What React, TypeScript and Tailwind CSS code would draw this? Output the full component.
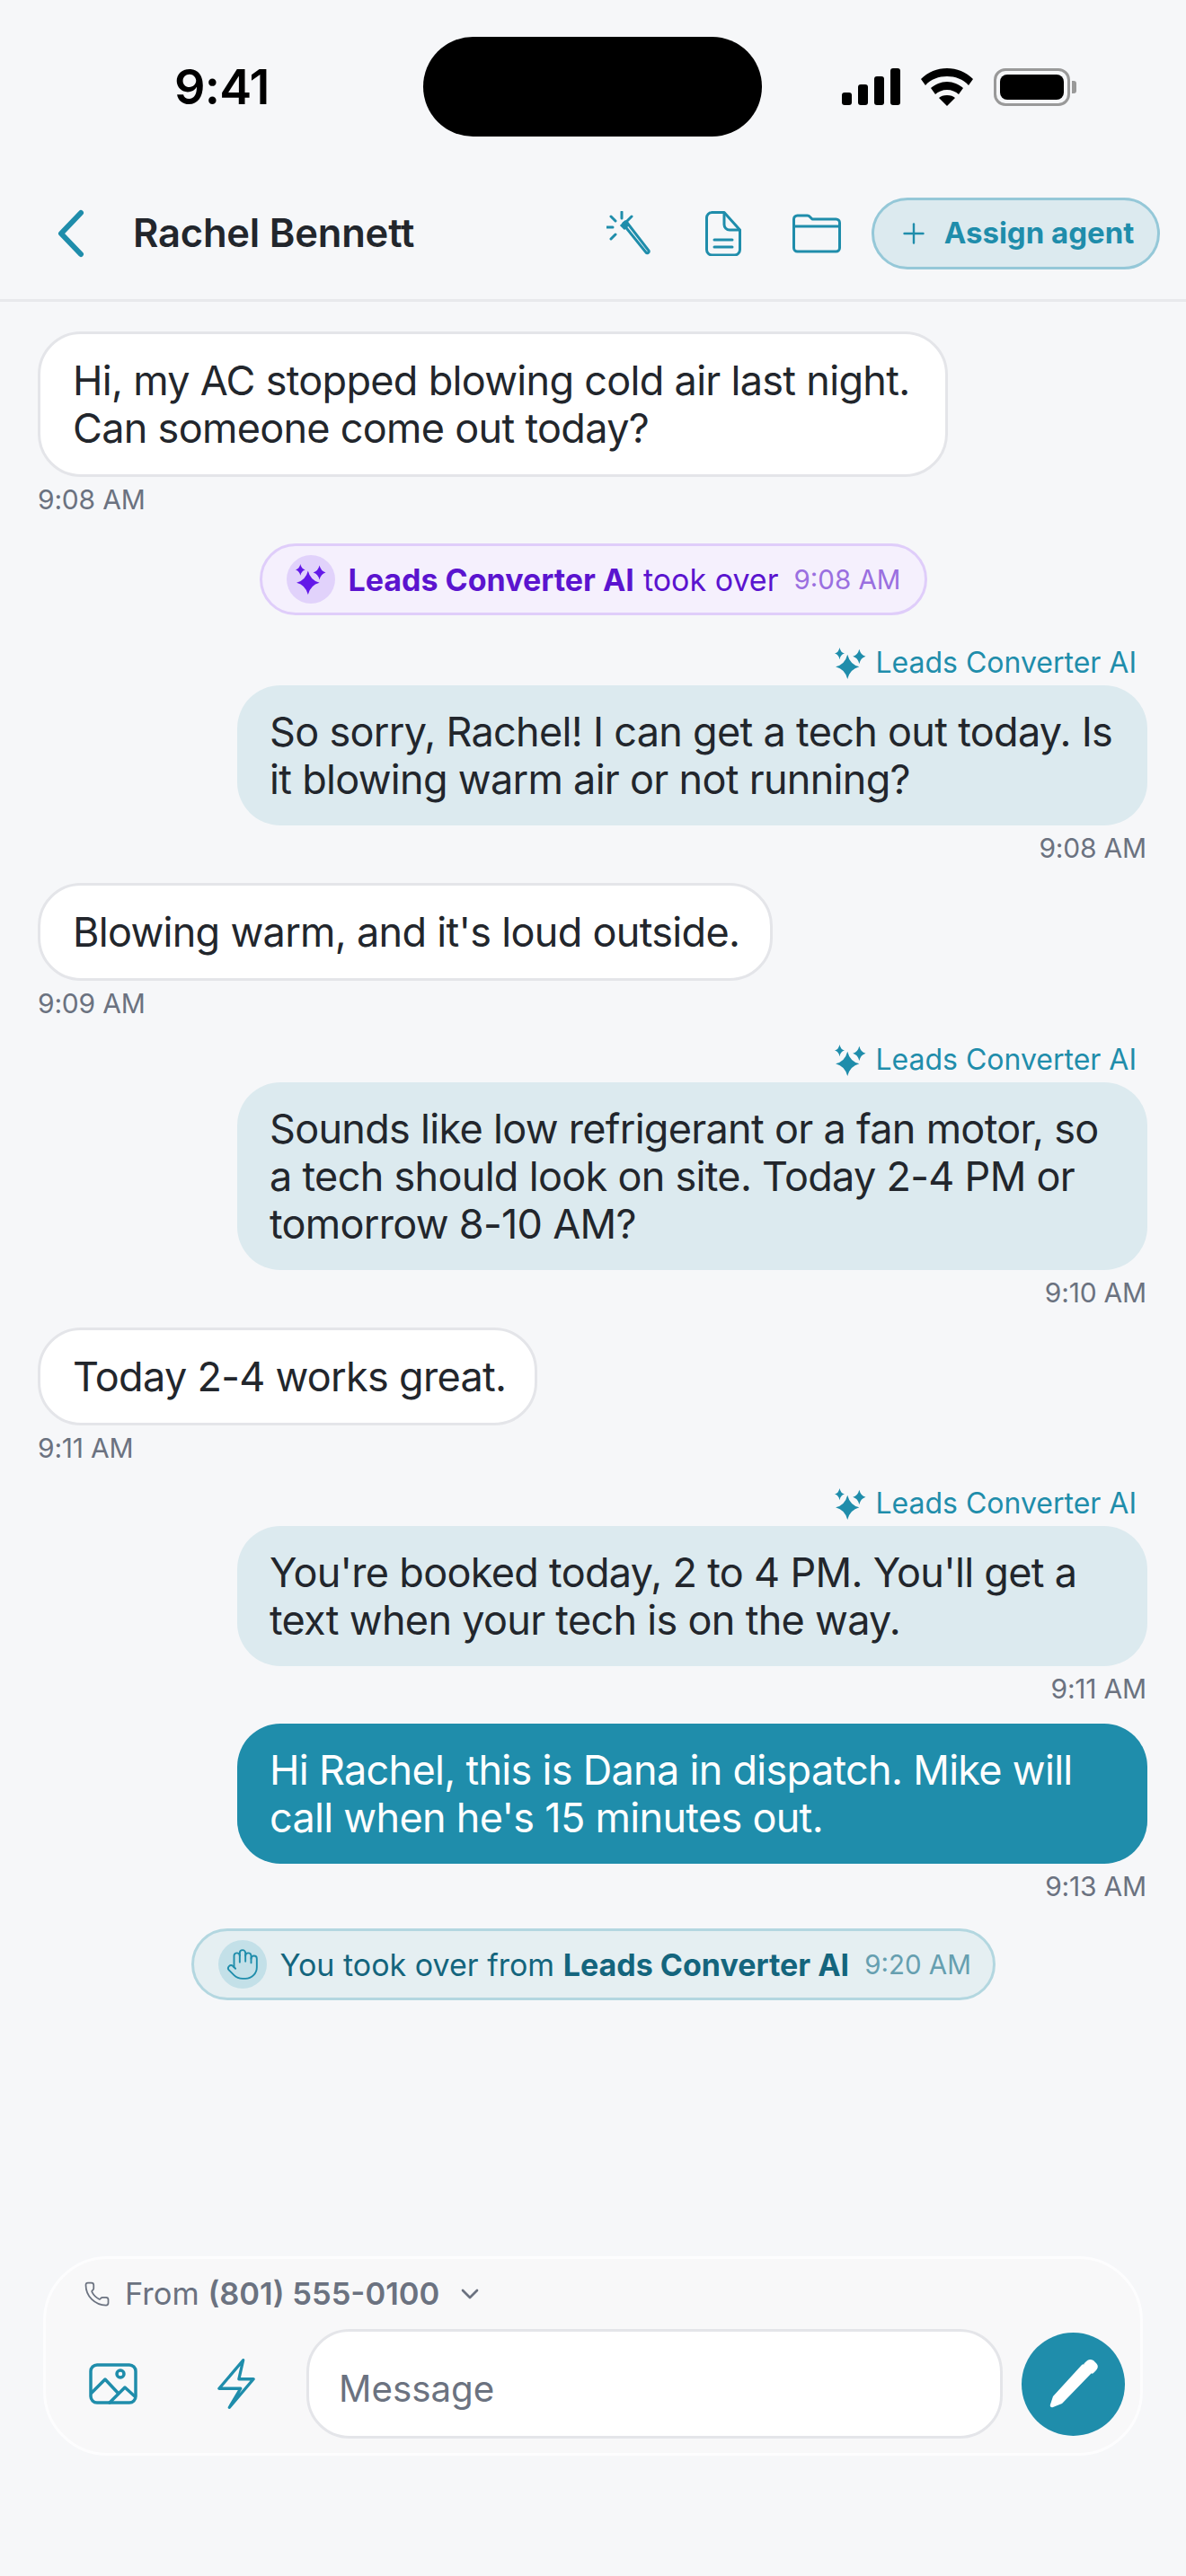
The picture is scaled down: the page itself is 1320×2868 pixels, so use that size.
import { ChevronDown, Hand, Phone, Plus } from 'lucide-react';
import type { ReactNode } from 'react';

function Sparkles({ className }: { className?: string }) {
  return (
    <svg viewBox="0 0 32 32" className={className} fill="currentColor">
      <path d="M13 7Q15.500 17 25 19.500 15.500 22 13 32 10.500 22 1 19.500 10.500 17 13 7z" />
      <path d="M5 0Q6 5 10 6 6 7 5 12 4 7 0 6 4 5 5 0z" />
      <path d="M25 1.500Q26.500 7.500 31.500 9 26.500 10.500 25 16.500 23.500 10.500 18.500 9 23.500 7.500 25 1.500z" />
    </svg>
  );
}

function AgentLabel() {
  return (
    <div className="flex items-center justify-end gap-[10px] pr-[55px] h-[46px] mb-[2px] text-[32px] leading-[46px] text-[#1f8dab]">
      <Sparkles className="w-[35px] h-[35px]" />
      <span>Leads Converter AI</span>
    </div>
  );
}

function Time({ children, right }: { children: ReactNode; right?: boolean }) {
  return (
    <div className={`text-[30px] tracking-[-0.2px] leading-[40px] text-[#6b7280] mt-[5px] ${right ? 'text-right pr-[1px]' : ''}`}>
      {children}
    </div>
  );
}

function Incoming({ text, time, width }: { text: ReactNode; time: string; width: string }) {
  return (
    <div className="pl-[42px]">
      <div className={`${width} bg-white border-[3px] border-[#e4e5e9] rounded-[48px] pl-[36px] py-[25px] text-[45px] tracking-[-0.7px] leading-[53px] text-[#22262c]`}>
        {text}
      </div>
      <Time>{time}</Time>
    </div>
  );
}

function Outgoing({ text, time, dark }: { text: ReactNode; time: string; dark?: boolean }) {
  return (
    <div className="pl-[264px] pr-[43px]">
      <div className={`rounded-[48px] pl-[36px] pr-[30px] py-[25px] text-[45px] tracking-[-0.7px] leading-[53px] ${dark ? 'bg-[#1f8dab] text-white' : 'bg-[#dceaef] text-[#22262c]'}`}>
        {text}
      </div>
      <Time right>{time}</Time>
    </div>
  );
}

export default function App() {
  return (
    <div className="w-[1320px] h-[2868px] bg-[#f6f7f9] flex flex-col font-['Inter',sans-serif] overflow-hidden">
      {/* status bar */}
      <div className="grid grid-cols-[471px_377px_1fr] pt-[41px] h-[190px] shrink-0">
        <div className="h-[111px] flex items-center pl-[194px] text-[54px] font-semibold text-black tracking-[-0.8px]">9:41</div>
        <div className="h-[111px] bg-black rounded-full" />
        <div className="h-[111px] flex items-center pl-[89px] gap-[23px]">
          <svg viewBox="0 0 65 41" className="w-[65px] h-[41px]" fill="#000">
            <rect x="0" y="27" width="11" height="14" rx="3" />
            <rect x="18" y="18" width="11" height="23" rx="3" />
            <rect x="36" y="9" width="11" height="32" rx="3" />
            <rect x="54" y="0" width="11" height="41" rx="3" />
          </svg>
          <svg viewBox="0 0 58 42" className="w-[58px] h-[42px]" fill="#000">
            <path d="M29 0c11 0 21 4 29 12l-5 7C47 12 38 9 29 9S11 12 5 19l-5-7C8 4 18 0 29 0z" />
            <path d="M29 15c7 0 13 3 18 7l-5 7c-3-3-8-5-13-5s-10 2-13 5l-5-7c5-4 11-7 18-7z" />
            <path d="M29 30c4 0 7 1 9 3L29 42l-9-9c2-2 5-3 9-3z" />
          </svg>
          <div className="flex items-center">
            <div className="w-[85px] h-[42px] rounded-[13px] border-[3px] border-[#999] p-[4px]">
              <div className="w-full h-full bg-black rounded-[8px]" />
            </div>
            <div className="w-[5px] h-[14px] bg-[#999] rounded-r-[3px] ml-[2px]" />
          </div>
        </div>
      </div>

      {/* header */}
      <div className="h-[146px] shrink-0 border-b-[3px] border-[#e8e9ec] flex items-center pb-[3px] pl-[62px] pr-[29px]">
        <svg viewBox="0 0 34 56" className="w-[34px] h-[56px] text-[#1f8dab]" fill="none" stroke="currentColor" strokeWidth="6" strokeLinecap="round" strokeLinejoin="round">
          <path d="M28 5 6 28l22 23" />
        </svg>
        <div className="ml-[52px] text-[43.5px] font-semibold text-[#22262c] flex-1 tracking-[-0.2px]">Rachel Bennett</div>
        {/* wand */}
        <svg viewBox="0 0 50 50" className="w-[50px] h-[50px] text-[#1f8dab]" fill="none" stroke="currentColor" strokeWidth="3" strokeLinecap="round">
          <path d="M19 15 44 46c1 2 4 0 3-2L23 13c-1-2-5 0-4 2z" />
          <path d="M17 16l4-4 3 3-4 4z" fill="currentColor" />
          <path d="M17 1v7M5 6l5 5M28 6l-5 5M0 18h7M5 31l5-5" />
        </svg>
        <svg viewBox="0 0 40 50" className="w-[40px] h-[50px] ml-[60px] text-[#1f8dab]" fill="none" stroke="currentColor" strokeWidth="3" strokeLinecap="round" strokeLinejoin="round">
          <path d="M7 1.500h14L38.500 21v22a6 6 0 0 1-6 6h-25a6 6 0 0 1-6-6V7.500a6 6 0 0 1 6-6z" />
          <path d="M21 2v13a6 6 0 0 0 6 6h11" />
          <path d="M10 32h20M10 40h20" />
        </svg>
        <svg viewBox="0 0 54 44" className="w-[54px] h-[44px] ml-[57px] text-[#1f8dab]" fill="none" stroke="currentColor" strokeWidth="3" strokeLinecap="round" strokeLinejoin="round">
          <path d="M1.500 14V6a4 4 0 0 1 4-4h11a4 4 0 0 1 3 1.500L22 6h26.500a4 4 0 0 1 4 4v4z" />
          <path d="M1.500 14v24a4 4 0 0 0 4 4h43a4 4 0 0 0 4-4V14" />
        </svg>
        <div className="ml-[34px] h-[80px] w-[321px] rounded-full border-[3px] border-[#95c8d8] bg-[#dceaef] flex items-center justify-center gap-[16px] text-[33px] font-bold text-[#1f8dab]">
          <Plus className="w-[36px] h-[36px]" strokeWidth={1.6} />
          <span>Assign agent</span>
        </div>
      </div>

      {/* messages */}
      <div className="flex-1 pt-[33px] flex flex-col">
        <Incoming width="w-[1013px]" text={<>Hi, my AC stopped blowing cold air last night.<br />Can someone come out today?</>} time="9:08 AM" />

        <div className="mt-[29px] flex justify-center">
          <div className="h-[80px] w-[743px] rounded-full border-[3px] border-[#dfcdfa] bg-[#f5f0fd] flex items-center pl-[27px] text-[#5b14cf] text-[34px]">
            <div className="w-[54px] h-[54px] rounded-full bg-[#e1d2fb] flex items-center justify-center">
              <Sparkles className="w-[34px] h-[34px] text-[#6318e8]" />
            </div>
            <span className="ml-[15px] font-bold">Leads Converter AI</span>
            <span className="ml-[10px]">took over</span>
            <span className="ml-[17px] text-[29.5px] text-[#9a6fe0]">9:08 AM</span>
          </div>
        </div>

        <div className="mt-[30px]"><AgentLabel /></div>
        <Outgoing text={<>So sorry, Rachel! I can get a tech out today. Is<br />it blowing warm air or not running?</>} time="9:08 AM" />

        <div className="mt-[19px]">
          <Incoming width="w-[818px]" text="Blowing warm, and it's loud outside." time="9:09 AM" />
        </div>

        <div className="mt-[20px]"><AgentLabel /></div>
        <Outgoing text={<>Sounds like low refrigerant or a fan motor, so<br />a tech should look on site. Today 2-4 PM or<br />tomorrow 8-10 AM?</>} time="9:10 AM" />

        <div className="mt-[19px]">
          <Incoming width="w-[556px]" text="Today 2-4 works great." time="9:11 AM" />
        </div>

        <div className="mt-[19px]"><AgentLabel /></div>
        <Outgoing text={<>You're booked today, 2 to 4 PM. You'll get a<br />text when your tech is on the way.</>} time="9:11 AM" />

        <div className="mt-[19px]">
          <Outgoing dark text={<>Hi Rachel, this is Dana in dispatch. Mike will<br />call when he's 15 minutes out.</>} time="9:13 AM" />
        </div>

        <div className="mt-[27px] flex justify-center">
          <div className="h-[80px] w-[895px] rounded-full border-[3px] border-[#b3d7e0] bg-[#e5eff2] flex items-center pl-[27px] text-[#14657d] text-[34px]">
            <div className="w-[54px] h-[54px] rounded-full bg-[#c3e0e8] flex items-center justify-center">
              <Hand className="w-[38px] h-[38px] text-[#1f8dab]" strokeWidth={1.2} />
            </div>
            <span className="ml-[15px]">You took over from <b className="font-bold">Leads Converter AI</b></span>
            <span className="ml-[17px] text-[29.5px] text-[#669fb0]">9:20 AM</span>
          </div>
        </div>
      </div>

      {/* composer */}
      <div className="mx-[48px] mb-[134px] h-[222px] shrink-0 rounded-[72px] bg-[#f8f8f9] border-[3px] border-[#fdfdfe]">
        <div className="h-[78px] flex items-center pl-[42px] text-[34.500px] text-[#6b7280]">
          <Phone className="w-[30px] h-[30px] text-[#6b7280]" strokeWidth={1.4} />
          <span className="ml-[16px]">From <span className="font-semibold">(801) 555-0100</span></span>
          <ChevronDown className="ml-[18px] w-[32px] h-[32px]" strokeWidth={2} />
        </div>
        <div className="flex items-center pl-[48px] pr-[17px]">
          <svg viewBox="0 0 54 46" className="w-[54px] h-[46px] text-[#1f8dab]" fill="none" stroke="currentColor" strokeWidth="3.500" strokeLinecap="round" strokeLinejoin="round">
            <rect x="2" y="2" width="50" height="42" rx="7" />
            <circle cx="35" cy="12" r="4" />
            <path d="M3 33 18 18 33 34M23 44 40 27 51 37" />
          </svg>
          <svg viewBox="0 0 44 59" className="ml-[89px] w-[42px] h-[58px] text-[#1f8dab]" fill="none" stroke="currentColor" strokeWidth="3.500" strokeLinecap="round" strokeLinejoin="round">
            <path d="M30 2 2 35h25L14 57l28-33H25z" />
          </svg>
          <div className="ml-[57px] flex-1 h-[122px] rounded-[48px] border-[3px] border-[#e4e5e9] bg-white flex items-center pl-[33px] pt-[12px] text-[40.300px] text-[#6b7280]">
            Message
          </div>
          <div className="ml-[21px] w-[115px] h-[115px] rounded-full bg-[#1f8dab] flex items-center justify-center">
            <svg viewBox="0 0 56 56" className="w-[56px] h-[56px]" fill="#fff">
              <path d="M5 54c-2 1-4-1-3-3l3-9L37 7c1-1 2-1 3 0l7 7c1 1 1 2 0 3L15 50z" />
              <path d="M41 4c3-3 5-4 9-2l3 3c3 3 2 6-1 9l-2 2c-1 1-2 1-3 0l-7-8c-1-1-1-2 0-3z" />
            </svg>
          </div>
        </div>
      </div>
    </div>
  );
}
